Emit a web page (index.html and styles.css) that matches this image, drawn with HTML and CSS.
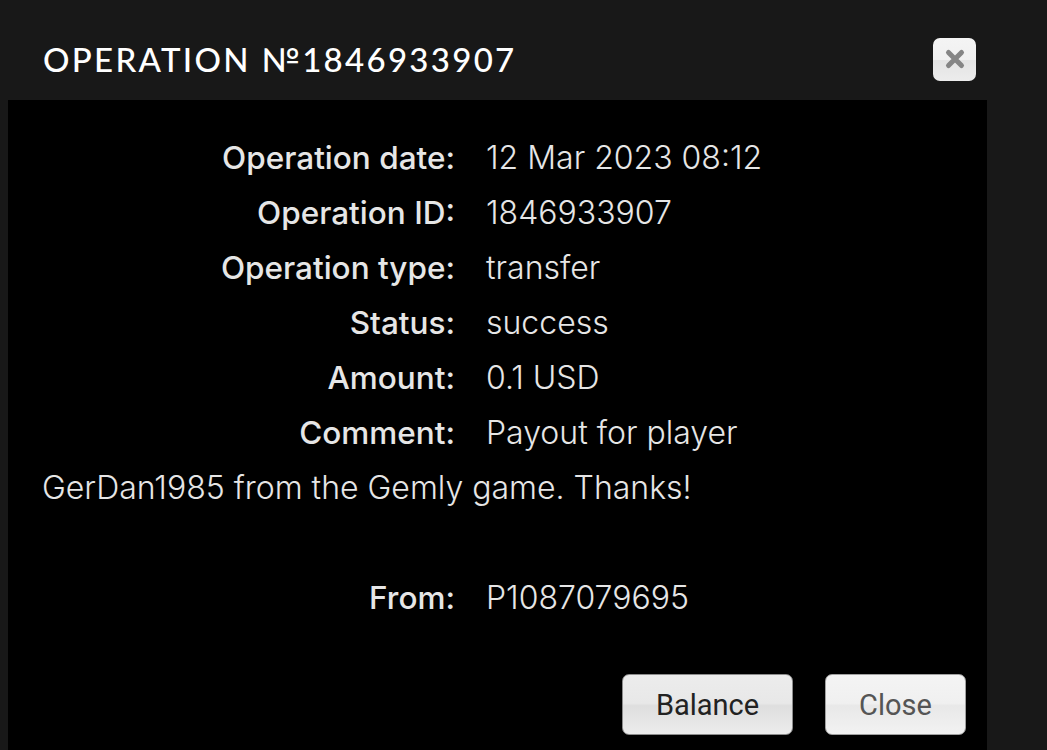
FILE: index.html
```html
<!DOCTYPE html>
<html>
<head>
<meta charset="utf-8">
<link rel="stylesheet" href="styles.css">
</head>
<body>
<div class="header">
  <h1 class="title">OPERATION №1846933907</h1>
  <button class="x-btn" aria-label="Close">
    <svg width="22" height="22" viewBox="0 0 22 22"><path d="M4.5 4.5 L17.5 17.5 M17.5 4.5 L4.5 17.5" stroke="#858585" stroke-width="5" stroke-linecap="round"/></svg>
  </button>
</div>
<div class="panel">
  <div class="rows">
    <div class="row"><span class="label">Operation date:</span><span class="value">12 Mar 2023 08:12</span></div>
    <div class="row"><span class="label">Operation ID:</span><span class="value">1846933907</span></div>
    <div class="row"><span class="label">Operation type:</span><span class="value">transfer</span></div>
    <div class="row"><span class="label">Status:</span><span class="value">success</span></div>
    <div class="row"><span class="label">Amount:</span><span class="value">0.1 USD</span></div>
    <div class="row"><span class="label">Comment:</span><span class="value">Payout for player</span></div>
    <div class="row"><span class="value">GerDan1985 from the Gemly game. Thanks!</span></div>
    <div class="row empty"></div>
    <div class="row"><span class="label">From:</span><span class="value">P1087079695</span></div>
  </div>
  <div class="actions">
    <button class="btn btn-balance">Balance</button>
    <button class="btn btn-close">Close</button>
  </div>
</div>
</body>
</html>
```
FILE: styles.css
```css
* { box-sizing: border-box; }
html, body { margin: 0; padding: 0; }
body {
  background: #181818;
  width: 1047px;
  height: 750px;
  overflow: hidden;
}
.header {
  height: 100px;
  display: flex;
  align-items: center;
  justify-content: space-between;
  padding: 18px 71px 0 43px;
}
.title {
  margin: 0;
  font-family: "Lato", sans-serif;
  font-weight: 500;
  font-size: 33px;
  letter-spacing: 2.3px;
  color: #ffffff;
}
.x-btn {
  width: 43px;
  height: 43px;
  border: none;
  border-radius: 7px;
  background: linear-gradient(#f4f4f4 0%, #f0f0f0 50%, #e4e4e4 52%, #ececec 100%);
  display: flex;
  align-items: center;
  justify-content: center;
  padding: 0;
}
.panel {
  margin-left: 8px;
  width: 979px;
  height: 650px;
  background: #000;
  padding: 30px 21px 0 34px;
}
.rows {
  font-family: "Inter", sans-serif;
  font-size: 32px;
  line-height: 55px;
  color: #e6e6e6;
  padding-right: 60px;
}
.row { min-height: 55px; white-space: nowrap; }
.label {
  display: inline-block;
  width: 413px;
  text-align: right;
  font-weight: 500;
  font-size: 31.5px;
  margin-right: 31px;
}
.value { font-weight: 300; }
.actions {
  display: flex;
  justify-content: flex-end;
  gap: 32px;
  margin-top: 49px;
}
.btn {
  height: 61px;
  border: 1px solid #8c8c8c;
  border-radius: 7px;
  background: linear-gradient(#ececec 0%, #e8e8e8 48%, #dedede 52%, #ececec 100%);
  font-family: "Roboto", sans-serif;
  font-size: 29px;
  padding: 0;
}
.btn-balance { width: 171px; color: #222; }
.btn-close { width: 141px; color: #555; background: linear-gradient(#f4f4f4 0%, #f0f0f0 48%, #e8e8e8 52%, #f2f2f2 100%); border-color: #a0a0a0; }
```
